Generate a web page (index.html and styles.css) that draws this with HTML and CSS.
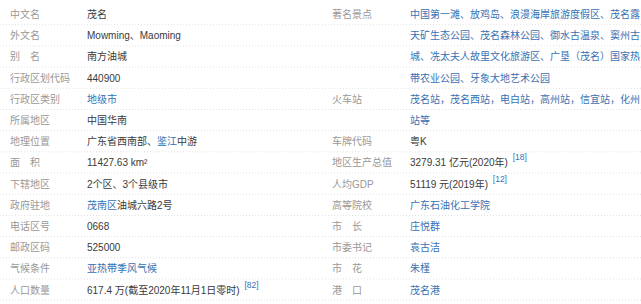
FILE: index.html
```html
<!DOCTYPE html>
<html lang="zh-CN">
<head>
<meta charset="utf-8">
<title>茂名</title>
<link rel="stylesheet" href="styles.css">
</head>
<body>
<div class="info">
  <dl class="col col-left">
    <dt>中文名</dt><dd>茂名</dd>
    <dt>外文名</dt><dd>Mowming、Maoming</dd>
    <dt>别　名</dt><dd>南方油城</dd>
    <dt>行政区划代码</dt><dd>440900</dd>
    <dt>行政区类别</dt><dd><a>地级市</a></dd>
    <dt>所属地区</dt><dd>中国华南</dd>
    <dt>地理位置</dt><dd>广东省西南部、<a>鉴江</a>中游</dd>
    <dt>面　积</dt><dd>11427.63 km²</dd>
    <dt>下辖地区</dt><dd>2个区、3个县级市</dd>
    <dt>政府驻地</dt><dd><a>茂南区</a>油城六路2号</dd>
    <dt>电话区号</dt><dd>0668</dd>
    <dt>邮政区码</dt><dd>525000</dd>
    <dt>气候条件</dt><dd><a>亚热带季风气候</a></dd>
    <dt>人口数量</dt><dd>617.4 万(截至2020年11月1日零时) <sup>[82]</sup></dd>
  </dl>
  <dl class="col col-right">
    <dt>著名景点</dt><dd><a>中国第一滩、放鸡岛、浪漫海岸旅游度假区、茂名露天矿生态公园、茂名森林公园、御水古温泉、窦州古城、冼太夫人故里文化旅游区、广垦（茂名）国家热带农业公园、牙象大地艺术公园</a></dd>
    <dt>火车站</dt><dd><a>茂名站，茂名西站，电白站，高州站，信宜站，化州站等</a></dd>
    <dt>车牌代码</dt><dd>粤K</dd>
    <dt>地区生产总值</dt><dd>3279.31 亿元(2020年) <sup>[18]</sup></dd>
    <dt>人均GDP</dt><dd>51119 元(2019年) <sup>[12]</sup></dd>
    <dt>高等院校</dt><dd><a>广东石油化工学院</a></dd>
    <dt>市　长</dt><dd><a>庄悦群</a></dd>
    <dt>市委书记</dt><dd><a>袁古洁</a></dd>
    <dt>市　花</dt><dd><a>朱槿</a></dd>
    <dt>港　口</dt><dd><a>茂名港</a></dd>
  </dl>
</div>
</body>
</html>
```
FILE: styles.css
```css
html, body {
  margin: 0;
  padding: 0;
  background: #fff;
}
body {
  font-family: "Liberation Sans", "Noto Sans CJK SC", sans-serif;
  font-size: 10px;
  color: #3a3a3a;
}
.info {
  display: flex;
  padding-top: 4px;
}
.col {
  margin: 0;
  display: grid;
  align-content: start;
  line-height: 21.2px;
  background-image: conic-gradient(from 180deg at 1px calc(100% - 1px), #e0e0e0 90deg, transparent 0);
  background-size: 3px 21.2px;
}
.col-left {
  width: 320px;
  padding-left: 10px;
  grid-template-columns: 77px 1fr;
}
.col-right {
  width: 309px;
  margin-left: 2px;
  padding-left: 10px;
  grid-template-columns: 78px 231px;
}
dt {
  color: #999;
  white-space: nowrap;
}
dd {
  margin: 0;
}
a {
  color: #3671b4;
  text-decoration: none;
}
sup {
  font-size: 8.5px;
  line-height: 0;
  vertical-align: 0;
  position: relative;
  top: -6px;
  margin-left: 2px;
  color: #3671b4;
}
```
